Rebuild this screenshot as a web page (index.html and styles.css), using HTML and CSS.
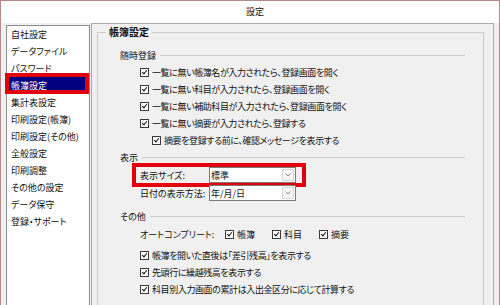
FILE: index.html
```html
<!DOCTYPE html>
<html lang="ja">
<head>
    <meta charset="UTF-8">
    <title>設定</title>
    <link rel="stylesheet" href="styles.css">
</head>
<body>
<div class="window">
    <div class="titlebar">設定</div>
    <div class="client">
        <ul class="menu">
            <li>自社設定</li>
            <li>データファイル</li>
            <li>パスワード</li>
            <li class="selected">帳簿設定<span class="mark mark-menu"></span></li>
            <li>集計表設定</li>
            <li>印刷設定(帳簿)</li>
            <li>印刷設定(その他)</li>
            <li>全般設定</li>
            <li>印刷調整</li>
            <li>その他の設定</li>
            <li>データ保守</li>
            <li>登録・サポート</li>
        </ul>
        <div class="page">
            <fieldset class="group">
                <legend>帳簿設定</legend>

                <div class="section first">
                    <div class="section-head">随時登録</div>
                    <div class="check"><span class="cb"></span>一覧に無い帳簿名が入力されたら、登録画面を開く</div>
                    <div class="check"><span class="cb"></span>一覧に無い科目が入力されたら、登録画面を開く</div>
                    <div class="check"><span class="cb"></span>一覧に無い補助科目が入力されたら、登録画面を開く</div>
                    <div class="check"><span class="cb"></span>一覧に無い摘要が入力されたら、登録する</div>
                    <div class="check sub"><span class="cb"></span>摘要を登録する前に、確認メッセージを表示する</div>
                </div>

                <div class="section">
                    <div class="section-head">表示</div>
                    <div class="field">
                        <span class="field-label">表示サイズ:</span>
                        <div class="select"><span>標準</span><span class="select-btn"><svg width="6" height="4" viewBox="0 0 6 4"><polyline points="0.5,0.5 3,3 5.5,0.5" fill="none" stroke="#8a8a8a" stroke-width="1"/></svg></span></div>
                        <span class="mark mark-field"></span>
                    </div>
                    <div class="field">
                        <span class="field-label">日付の表示方法:</span>
                        <div class="select"><span>年/月/日</span><span class="select-btn"><svg width="6" height="4" viewBox="0 0 6 4"><polyline points="0.5,0.5 3,3 5.5,0.5" fill="none" stroke="#8a8a8a" stroke-width="1"/></svg></span></div>
                    </div>
                </div>

                <div class="section other">
                    <div class="section-head">その他</div>
                    <div class="auto">
                        <span class="auto-label">オートコンプリート:</span>
                        <span class="auto-item"><span class="cb"></span>帳簿</span>
                        <span class="auto-item"><span class="cb"></span>科目</span>
                        <span class="auto-item"><span class="cb"></span>摘要</span>
                    </div>
                    <div class="checks">
                        <div class="check"><span class="cb"></span>帳簿を開いた直後は「差引残高」を表示する</div>
                        <div class="check"><span class="cb"></span>先頭行に繰越残高を表示する</div>
                        <div class="check"><span class="cb"></span>科目別入力画面の累計は入出金区分に応じて計算する</div>
                    </div>
                </div>
            </fieldset>
        </div>
    </div>
</div>
</body>
</html>
```

FILE: styles.css
```css
body{
    margin: 0;
    background-color: #f0f0f0;
    font-family: "Noto Sans CJK JP", sans-serif;
    font-size: 9px;
    font-feature-settings: "palt";
    color: #111;
}
.window{
    width: 500px;
    height: 305px;
    box-sizing: border-box;
    border: 1px solid #b88888;
    border-bottom: none;
    overflow: hidden;
    background-color: #f0f0f0;
}
.titlebar{
    height: 22px;
    line-height: 22px;
    padding-left: 10px;
    text-align: center;
    background-color: #ffffff;
}
.client{
    display: flex;
    height: 282px;
}
.menu{
    list-style: none;
    margin: 2px 0 0 5px;
    padding: 0;
    width: 84px;
    height: 300px;
    flex: none;
    box-sizing: border-box;
    border: 1px solid #8a8d93;
    border-bottom: none;
    background-color: #ffffff;
}
.menu li{
    position: relative;
    height: 17px;
    line-height: 17px;
    padding-left: 4px;
    white-space: nowrap;
}
.menu li.selected{
    background-color: #000080;
    color: #ffffff;
}
.page{
    margin-left: 1px;
    width: 403px;
    height: 300px;
    flex: none;
    box-sizing: border-box;
    border: 1px solid #acacac;
    border-bottom: none;
    padding-left: 5px;
}
.group{
    margin: 0;
    padding: 0;
    width: 387px;
    height: 300px;
    box-sizing: border-box;
    border: 1px solid #cbcbcb;
    min-width: 0;
}
.group legend{
    margin-left: 8px;
    padding: 0 3px;
    font-weight: bold;
    font-size: 10px;
    line-height: 16px;
}
.section{
    margin: 0 18px 0 22px;
}
.section.first{
    margin-top: 7px;
}
.section.other{
    margin-top: 6px;
}
.section-head{
    display: flex;
    align-items: center;
    height: 17px;
}
.section-head::after{
    content: "";
    flex: 1;
    margin-left: 4px;
    border-top: 1px solid #cdcdcd;
}
.check{
    display: flex;
    align-items: center;
    height: 17px;
    padding-left: 20px;
    white-space: nowrap;
    letter-spacing: -0.4px;
}
.check.sub{
    padding-left: 32px;
}
.checks{
    margin-top: 4px;
}
.cb{
    position: relative;
    flex: none;
    width: 9px;
    height: 9px;
    margin-right: 3px;
    box-sizing: border-box;
    border: 1px solid #3a3a3a;
    background-color: #ffffff;
}
.cb::after{
    content: "";
    position: absolute;
    left: 2px;
    top: 0;
    width: 2px;
    height: 4px;
    border: solid #111;
    border-width: 0 1.5px 1.5px 0;
    transform: rotate(40deg);
}
.field{
    position: relative;
    display: flex;
    align-items: center;
    height: 18px;
    padding-left: 20px;
}
.field-label{
    width: 69px;
    flex: none;
}
.select{
    display: flex;
    align-items: center;
    justify-content: space-between;
    width: 87px;
    height: 16px;
    box-sizing: border-box;
    padding-left: 1px;
    border: 1px solid #7a7a7a;
    background-color: #ffffff;
}
.select-btn{
    display: flex;
    align-items: center;
    justify-content: center;
    width: 12px;
    height: 12px;
    margin-right: 1px;
    box-sizing: border-box;
    border: 1px solid #d6d6d6;
    background-color: #f6f6f6;
}
.auto{
    display: flex;
    align-items: center;
    height: 18px;
    padding-left: 20px;
}
.auto-label{
    width: 85px;
    flex: none;
}
.auto-item{
    display: flex;
    align-items: center;
    margin-right: 17px;
}
.mark{
    position: absolute;
    box-sizing: border-box;
    border: 4px solid #e2000c;
}
.mark-menu{
    left: -2px;
    top: -4px;
    width: 84px;
    height: 21px;
}
.mark-field{
    left: 12px;
    top: -3px;
    bottom: -3px;
    width: 174px;
}
```
